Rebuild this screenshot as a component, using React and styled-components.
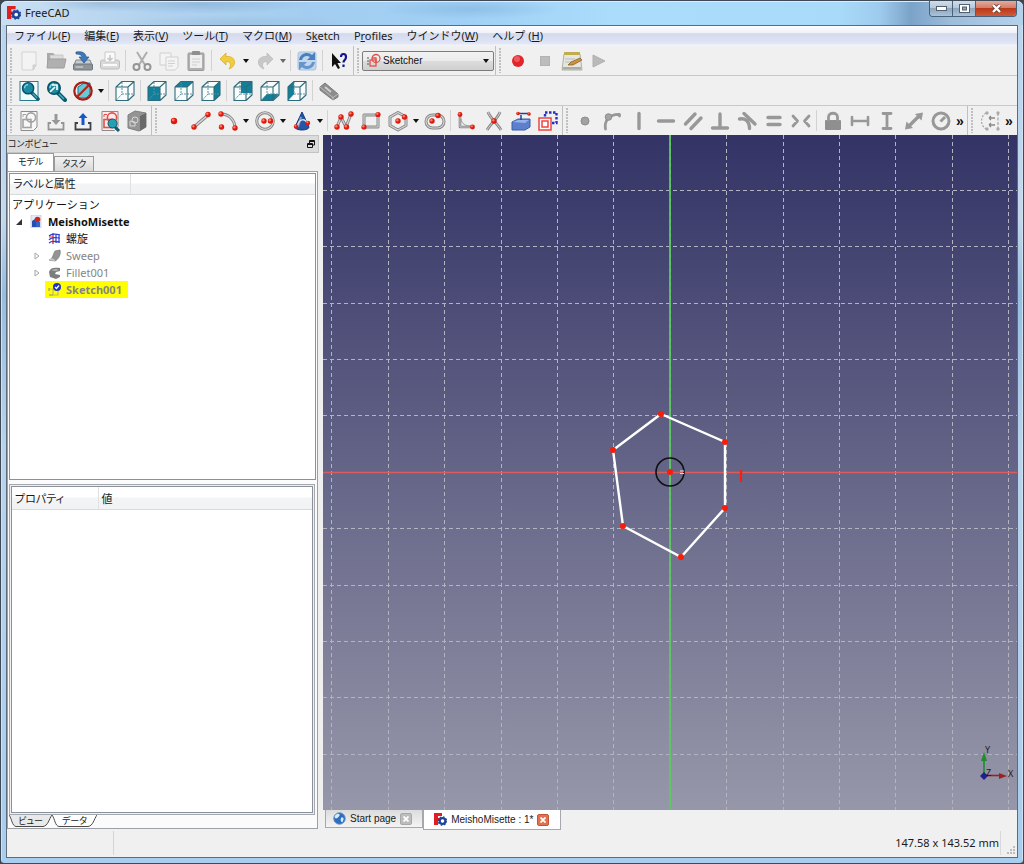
import React from 'react';
import styled, { createGlobalStyle, css } from 'styled-components';

const ui = '"Noto Sans", "Noto Sans CJK JP", sans-serif';
const gothic = '"Liberation Sans", "Noto Sans CJK JP", sans-serif';

const Global = createGlobalStyle`
  *, *::before, *::after { box-sizing: border-box; }
  body { margin: 0; background: #3c4650; font-family: ${ui}; font-size: 11px; color: #1a1a1a; }
  button { font: inherit; color: inherit; border: 0; padding: 0; margin: 0; background: none; cursor: default; }
  svg { display: block; }
`;

/* ---------- window frame ---------- */

const Window = styled.div`
  min-height: 100vh;
  display: flex;
  flex-direction: column;
  padding: 0 5px 5px;
  border: 1px solid #3f4a56;
  border-radius: 7px 7px 4px 4px;
  background:
    linear-gradient(90deg, #cfe2f4 0 1px, transparent 1px calc(100% - 1px), #cfe2f4 calc(100% - 1px)),
    linear-gradient(180deg, #b7d4ee 0, #bcd6ee 15%, #c4d8ea 25%, #96bde0 34%, #b8d4ec 52%, #a9cdee 100%);
`;

const TitleBar = styled.header`
  height: 24px;
  display: flex;
  align-items: center;
  gap: 4px;
  margin: 0 -5px;
  padding-left: 6px;
  border-radius: 6px 6px 0 0;
  background:
    radial-gradient(ellipse 60px 9px at 100px 2px, #8fb2d399, transparent),
    radial-gradient(ellipse 110px 10px at 200px 3px, #7da5cc88, transparent),
    radial-gradient(ellipse 120px 8px at 230px 22px, #87add055, transparent),
    radial-gradient(ellipse 90px 10px at 470px 8px, #84b4dd99, transparent),
    linear-gradient(90deg, #c9dff3 0, #b3d3ef 14%, #a3cdf0 30%, #a0d0f5 45%, #abdcfb 60%, #a9daf9 82%, #9ecbed 86%, #7ba3c8 89%, #9cbddb 93%, #b5d2eb 100%);
  box-shadow: inset 0 1px 0 #dcecf9;
`;

const Title = styled.h1`
  flex: 1;
  margin: 0;
  font-size: 11px;
  font-weight: 400;
  line-height: 24px;
`;

const WindowControls = styled.div`
  display: flex;
  align-self: flex-start;
  margin-right: 6px;
  border: 1px solid #49617a;
  border-top: 0;
  border-radius: 0 0 4px 4px;
  overflow: hidden;
`;

const WindowButton = styled.button`
  width: ${(p) => (p.$close ? 40 : 23)}px;
  height: 15px;
  display: grid;
  place-items: center;
  border-right: ${(p) => (p.$close ? '0' : '1px solid #49617a')};
  background: ${(p) =>
    p.$close
      ? 'linear-gradient(#e3aa9c 0, #d27c66 48%, #bb3a1c 50%, #cf5a38 100%)'
      : 'linear-gradient(#d0deeb 0, #b3c6d8 48%, #8ea7bf 50%, #abc3d8 100%)'};
`;

const Client = styled.div`
  flex: 1;
  display: flex;
  flex-direction: column;
  border: 1px solid #5f6b78;
  background: #f0f0f0;
`;

/* ---------- menu and toolbars ---------- */

const MenuBar = styled.nav`
  height: 20px;
  display: flex;
  gap: 14px;
  padding-left: 7px;
  background: linear-gradient(#fdfdfe 0, #eef1f9 35%, #d4daed 38%, #dfe5f5 85%, #f4f6fb 100%);
`;

const MenuItem = styled.button`
  line-height: 18px;
  white-space: nowrap;
`;

const ToolRow = styled.div`
  display: flex;
  height: 30px;
  border-bottom: 1px solid #c9c9c9;
  overflow: hidden;
  &:last-of-type { height: 29px; border-bottom: 0; }
`;

const Toolbar = styled.div`
  display: flex;
  align-items: center;
  padding-right: 1px;
  ${(p) => !p.$last && css`border-right: 1px solid #c0c0c0;`}
`;

const Grip = styled.span`
  width: 8px;
  height: 25px;
  background: radial-gradient(circle at 1px 1px, #c0c0c0 1px, transparent 1px) 3px 0 / 3px 3px repeat-y;
`;

const ToolButton = styled.button`
  width: 27px;
  height: 27px;
  display: grid;
  place-items: center;
`;

const ArrowButton = styled.button`
  width: 10px;
  height: 27px;
  display: grid;
  place-items: center;
  opacity: ${(p) => (p.disabled ? 0.6 : 1)};
`;

const Divider = styled.span`
  width: 1px;
  height: 21px;
  margin: 0 2px;
  background: #d2d2d2;
`;

const MoreButton = styled.button`
  width: 12px;
  height: 27px;
  font: 700 14px/24px "Liberation Sans", sans-serif;
  color: #111;
`;

const ComboBox = styled.label`
  position: relative;
  width: 132px;
  height: 20px;
  display: flex;
  align-items: center;
  padding-left: 4px;
  border: 1px solid #7c7c7c;
  border-radius: 2px;
  background: linear-gradient(#f2f2f2 0, #ebebeb 48%, #dddddd 50%, #cfcfcf 100%);
  & > svg:last-child { position: absolute; right: 4px; top: 7px; pointer-events: none; }
`;

const ComboSelect = styled.select`
  flex: 1;
  appearance: none;
  border: 0;
  padding: 0 0 0 1px;
  background: transparent;
  font: 10px/18px ${gothic};
  color: #111;
`;

/* ---------- left dock ---------- */

const Main = styled.main`
  flex: 1;
  display: flex;
  gap: 4px;
`;

const Dock = styled.aside`
  flex: 0 0 312px;
  display: flex;
  flex-direction: column;
`;

const DockTitle = styled.div`
  height: 18px;
  display: flex;
  justify-content: space-between;
  align-items: center;
  padding: 0 2px 0 1px;
  border: 1px solid #c3c3c3;
  border-left: 0;
  background: #dcdcdc;
  font: 9px/16px ${gothic};
  font-feature-settings: 'palt';
`;

const FloatButton = styled.button`
  width: 10px;
  height: 14px;
  display: grid;
  place-items: center;
`;

const TabRow = styled.div`
  height: 18px;
  display: flex;
  align-items: flex-end;
`;

const Tab = styled.button`
  height: ${(p) => (p.$active ? 18 : 15)}px;
  padding: 0 ${(p) => (p.$active ? 10 : 7)}px;
  border: 1px solid #9a9a9a;
  border-bottom: 0;
  font: 9px/13px ${gothic};
  font-feature-settings: 'palt';
  background: ${(p) => (p.$active ? '#fff' : 'linear-gradient(#f2f2f2, #d9d9d9)')};
`;

const Pane = styled.section`
  flex: 1;
  display: flex;
  flex-direction: column;
  margin-right: 1px;
  padding: 1px;
  border: 1px solid #9b9fa6;
  background: #fbfbfb;
`;

const TreeBox = styled.div`
  flex: 308 1 0;
  border: 1px solid #8b919a;
  background: #fff;
  margin-bottom: 4px;
`;

const TreeHeader = styled.div`
  height: 21px;
  display: flex;
  border-bottom: 1px solid #d8dade;
  background: linear-gradient(#fff 0, #fff 45%, #f3f4f6 50%, #f1f2f4 100%);
  line-height: 20px;
  font-feature-settings: 'palt';
  & > span { width: 121px; padding-left: 3px; border-right: 1px solid #dfe1e5; }
`;

const TreeList = styled.ul`
  list-style: none;
  margin: 0;
  padding: 1px 0 0;
`;

const TreeRow = styled.li`
  height: 17px;
  display: flex;
  align-items: center;
  padding-left: ${(p) => 2 + p.$level * 18}px;
  line-height: 17px;
  font-weight: ${(p) => (p.$bold ? 700 : 400)};
  color: ${(p) => (p.$muted ? '#858585' : '#111')};
`;

const Expander = styled.span`
  width: 15px;
  padding-left: 4px;
`;

const TreeLabel = styled.span`
  height: 17px;
  display: flex;
  align-items: center;
  gap: 5px;
  padding: 0 6px 0 3px;
  background: ${(p) => (p.$selected ? '#ffff00' : 'transparent')};
`;

const PropertyFrame = styled.div`
  flex: 330 1 0;
  margin-right: 1px;
  padding: 1px;
  border: 1px solid #a4a8ae;
  background: #f0f0f0;
  display: flex;
`;

const PropertyBox = styled.div`
  flex: 1;
  border: 1px solid #8b919a;
  background: #fff;
`;

const PropertyTable = styled.table`
  width: 100%;
  border-collapse: collapse;
  table-layout: fixed;
  th {
    height: 22px;
    padding: 0 0 0 3px;
    text-align: left;
    font-weight: 400;
    border-bottom: 1px solid #d8dade;
    background: linear-gradient(#fff 0, #fff 45%, #f3f4f6 50%, #f1f2f4 100%);
    font-feature-settings: 'palt';
  }
  th:first-child { width: 86px; border-right: 1px solid #dfe1e5; }
`;

const BottomTabs = styled.div`
  height: 12px;
  display: flex;
`;

const BottomTab = styled.button`
  position: relative;
  width: ${(p) => p.$width}px;
  height: 12px;
  font: 9px/10px ${gothic};
  font-feature-settings: 'palt';
  & > svg { position: absolute; inset: 0; width: 100%; height: 100%; }
  & > span { position: relative; }
`;

/* ---------- document area ---------- */

const Documents = styled.section`
  flex: 1;
  min-width: 0;
  display: flex;
  flex-direction: column;
`;

const Viewport = styled.div`
  flex: 1;
  position: relative;
  background: linear-gradient(#333366, #9797aa);
  & > svg { position: absolute; inset: 0; width: 100%; height: 100%; }
`;

const DocTabs = styled.div`
  height: 19px;
  display: flex;
  padding-left: 2px;
`;

const DocTab = styled.div`
  height: ${(p) => (p.$active ? 20 : 18)}px;
  display: flex;
  align-items: center;
  padding: 0 ${(p) => (p.$active ? '11px 0 10px' : '10px 0 7px')};
  border: 1px solid #a5a8ae;
  border-top: 0;
  background: ${(p) => (p.$active ? '#fff' : 'linear-gradient(#dcdcdc, #f4f4f4)')};
  font: 10px/18px ${gothic};
`;

const DocName = styled.button`
  display: flex;
  align-items: center;
  gap: 4px;
  margin-right: 4px;
  white-space: pre;
`;

const CloseTab = styled.button`
  width: 12px;
  height: 12px;
  display: grid;
  place-items: center;
  border-radius: 2px;
  border: 1px solid ${(p) => (p.$active ? '#c2553a' : '#a9a9a9')};
  background: ${(p) => (p.$active ? '#e2714f' : '#bdbdbd')};
`;

const StatusBar = styled.footer`
  height: 28px;
  display: flex;
  align-items: center;
  justify-content: space-between;
  padding-right: 2px;
`;

const Message = styled.div`
  width: 107px;
  height: 24px;
  border-right: 1px solid #d5d5d5;
`;

const Size = styled.div`
  display: flex;
  align-items: center;
  height: 24px;
  & > span { padding-right: 1px; border-right: 1px solid #d9d9d9; line-height: 24px; }
  & > svg { align-self: flex-end; margin-left: 5px; }
`;

/* ---------- drawings ---------- */

const Ball = ({ x, y, r = 3 }) => (
  <g>
    <circle cx={x} cy={y} r={r} fill="#dd1a0c" />
    <circle cx={x - r * 0.25} cy={y - r * 0.3} r={r * 0.45} fill="#ff7a66" />
  </g>
);

const FACES = {
  front: 'M2 7H14V20.5H2Z',
  top: 'M2 7 8 1.5H20L14 7Z',
  right: 'M14 7 20 1.5V15L14 20.5Z',
  rear: 'M9 1.5H20V13H9Z',
  bottom: 'M2 20.5 8 14H20L14 20.5Z',
  left: 'M2 7 8 1.5V14L2 20.5Z',
};

const Cube = ({ face }) => (
  <g fill="none" strokeLinejoin="round">
    <path d="M2 7 8 1.5H20V15L14 20.5H2Z" fill="#f8fcfd" />
    {face && <path d={FACES[face]} fill="#12809a" />}
    <path d="M8 2V14M8 14H20M8 14 2 20.5" stroke="#5e909d" strokeWidth="1" strokeDasharray="2 1" />
    <path d="M2 7H14V20.5H2ZM2 7 8 1.5H20L14 7M20 1.5V15L14 20.5" stroke="#2f6b7b" strokeWidth="1.1" />
  </g>
);

const Magnifier = ({ children }) => (
  <g>
    <path d="M12.5 12.5 20 20" stroke="#0b5b70" strokeWidth="4" strokeLinecap="round" />
    <path d="M14 14 19 19" stroke="#3dafc4" strokeWidth="1.5" />
    <circle cx="9" cy="8" r="6.2" fill="#1b8ba4" stroke="#075166" strokeWidth="1.6" />
    <path d="M5 8A4 4 0 0 1 9 4" stroke="#8ddceb" strokeWidth="1.5" fill="none" />
    {children}
  </g>
);

const Sketchy = ({ c, fill = '#f7f7f7' }) => (
  <g fill="none" stroke={c} strokeWidth="1.6">
    <path d="M3 1.5H19V17L15.5 20.5H3Z" fill={fill} strokeWidth="1" stroke="#8b8b8b" />
    <rect x="5" y="9.5" width="8" height="8" />
    <circle cx="13" cy="7.5" r="4.6" />
    <path d="M5 4.5H8M5 4.5V7" strokeWidth="1" />
  </g>
);

const Tray = ({ c, arrow, up }) => (
  <g>
    <path d="M6 13H3.5V19.5H18.5V13H16" fill="none" stroke={c} strokeWidth="1.8" />
    <path d={up ? 'M11 3 6.5 8H9.5V15H12.5V8H15.5Z' : 'M11 15 6.5 10H9.5V4H12.5V10H15.5Z'} fill={arrow} />
  </g>
);

const Thick = ({ d, w = 3.4 }) => <path d={d} fill="none" stroke="#989898" strokeWidth={w} strokeLinejoin="round" strokeLinecap="round" />;

const Line = ({ d, w = 3 }) => (
  <g fill="none" strokeLinejoin="round">
    <path d={d} stroke="#858585" strokeWidth={w} />
    <path d={d} stroke="#d5d5d5" strokeWidth={w - 1.8} />
  </g>
);

const ICONS = {
  new: <><path d="M4 2H18V15L15 20H4Z" fill="#f3f3f3" stroke="#d3d3d3" /><path d="M18 15H15V20Z" fill="#ddd" stroke="#ccc" /></>,
  open: <><path d="M2 3H8L10 5H18V16H2Z" fill="#a9a9a9" /><path d="M5 5H18V12H5Z" fill="#dcdcdc" stroke="#b7b7b7" strokeWidth=".6" /><path d="M3 9H21L19 18H2Z" fill="#b0b0b0" stroke="#9e9e9e" /></>,
  save: <><path d="M4 10H18L20 15H2Z" fill="#c7ccd1" stroke="#7e868e" /><rect x="1.5" y="14" width="19" height="6" rx="1" fill="#8e9499" stroke="#6f767d" /><path d="M3.5 17H11" stroke="#e4e4e4" /><path d="M4 2C10 1 14 3 14 7H17L12 13 7 7H10C10 5 7 4 4 4Z" fill="#3e78b8" stroke="#28588f" strokeWidth=".7" /></>,
  print: <><rect x="1.5" y="10" width="19" height="9" rx="2" fill="#d9d9d9" stroke="#bcbcbc" /><path d="M6 2H16V12H6Z" fill="#fafafa" stroke="#cacaca" /><path d="M11 5V10M8.500 8 11 10.500 13.500 8" fill="none" stroke="#c5c5c5" strokeWidth="1.500" /><path d="M4 15H18" stroke="#fafafa" strokeWidth="2" /></>,
  cut: <g fill="none" stroke="#959595" strokeWidth="2"><path d="M6 2 14 15M16 2 8 15" stroke="#adadad" /><circle cx="5.500" cy="17" r="3" /><circle cx="16.500" cy="17" r="3" /></g>,
  copy: <g fill="#f4f4f4" stroke="#d0d0d0"><path d="M2 3H13V15H2Z" /><path d="M8 7H20V17L17 20H8Z" /><path d="M10 11H17M10 13.500H17M10 16H15" /></g>,
  paste: <><rect x="3" y="3" width="16" height="17.500" rx="1" fill="#b0b0b0" stroke="#999" /><path d="M5 5H17V18H5Z" fill="#efefef" /><rect x="7" y="1" width="8" height="4" rx="1" fill="#8f8f8f" /><path d="M7 9H15M7 12H15M7 15H12" stroke="#cfcfcf" /></>,
  undo: <path d="M3 9 9 3V6.500C15 6 18 9 17.500 13 17 16 15 18 12 19 14.500 15 14 11.500 9 11.500V15Z" fill="#f1cd3e" stroke="#d9ae2a" strokeWidth=".8" />,
  redo: <path d="M19 9 13 3V6.500C7 6 4 9 4.500 13 5 16 7 18 10 19 7.500 15 8 11.500 13 11.500V15Z" fill="#c8c8c8" stroke="#bbb" strokeWidth=".8" />,
  refresh: <><rect x="2" y="2" width="18" height="18" rx="2" fill="#c3d6eb" stroke="#a9c1dd" /><path d="M3 10C4 3 12 1 16 5L19 2V10H11L14 7C11 5 7 6 6 10Z" fill="#4a80bd" /><path d="M19 12C18 19 10 21 6 17L3 20V12H11L8 15C11 17 15 16 16 12Z" fill="#6496cd" /></>,
  help: <><path d="M4 3V17L7 14 10 19 12 18 9.500 13H13Z" fill="#111" /><path d="M13 7C13 3 18 3 18 7 18 10 15.500 10 15.500 12.500M15.500 14.500V17" fill="none" stroke="#15158f" strokeWidth="2.200" /></>,
  record: <><circle cx="11" cy="11" r="6" fill="#e3242b" /><circle cx="10" cy="9" r="3" fill="#f0585c" /></>,
  stop: <rect x="6.500" y="6.500" width="9" height="9" fill="#bcbcbc" stroke="#b2b2b2" />,
  macro: <><path d="M3 4H19L21 20H1Z" fill="#e6e6e1" stroke="#b0b0aa" /><path d="M3 2H19V5H3Z" fill="#c0ad4b" /><path d="M4 9H14M4 12H11" stroke="#bbb" /><path d="M2 17H20V19.500H1.500Z" fill="#a9ada2" /><path d="M7 15 10 12 19 8 21 10 12 15Z" fill="#cf9239" stroke="#6c4c1c" strokeWidth=".6" /></>,
  play: <path d="M5 5 17 11 5 17Z" fill="#b9b9b9" stroke="#b0b0b0" />,
  fitAll: <><rect x="2" y="1.500" width="18" height="19" fill="#f4fbfd" stroke="#2b7b8f" /><g transform="translate(2 1) scale(.9)"><Magnifier /></g></>,
  fitSelection: <Magnifier><path d="M5 12 10 7M7 5H12V10" stroke="#fff" strokeWidth="1.600" fill="none" /></Magnifier>,
  drawStyle: <><path d="M6 7 12 3H18V14L14 18H6Z" fill="#67c9d6" stroke="#117386" /><circle cx="11" cy="11" r="8.700" fill="none" stroke="#a81c16" strokeWidth="2.200" /><path d="M5 17 17 5" stroke="#b5221b" strokeWidth="2.200" /></>,
  iso: <Cube />,
  front: <Cube face="front" />, top: <Cube face="top" />, right: <Cube face="right" />,
  rear: <Cube face="rear" />, bottom: <Cube face="bottom" />, left: <Cube face="left" />,
  measure: <><path d="M2 7 7 3 20 14V17L15 20 2 10Z" fill="#8d8d8d" stroke="#7c7c7c" /><path d="M2 7 15 17.500 20 14M15 17V20" fill="none" stroke="#bcbcbc" /><path d="M7 7 13 12" stroke="#d0d0d0" strokeWidth="2" /></>,
  sketch: <Sketchy c="#a2a2a2" />,
  leave: <Tray c="#959595" arrow="#989898" />,
  leaveUp: <Tray c="#3d4148" arrow="#1759c4" up />,
  viewSketch: <><Sketchy c="#e2504a" fill="#fdeaea" /><path d="M15 16 20 21" stroke="#0d5d70" strokeWidth="3" /><circle cx="13.500" cy="13.500" r="4.500" fill="#23a0b6" stroke="#0b5568" /></>,
  mapSketch: <><path d="M2 5 9 1 20 3V17L13 21 2 18Z" fill="#949494" stroke="#808080" /><path d="M14 6 20 3V17L14 21Z" fill="#696969" /><circle cx="9" cy="10" r="3" fill="none" stroke="#d9d9d9" /><path d="M4 11V16H9V12Z" fill="none" stroke="#d9d9d9" /></>,
  point: <Ball x={11} y={11} r={3.2} />,
  line: <><Line d="M4 17 18 5" w={3.4} /><Ball x={4} y={17} r={2.700} /><Ball x={18} y={4.500} r={2.700} /></>,
  arc: <><Line d="M4 4C12 4 18 10 18 18" /><Ball x={4} y={4} r={2.700} /><Ball x={4.500} y={17} r={2.700} /><Ball x={18} y={18} r={2.700} /></>,
  circle: <><circle cx="11" cy="11" r="8.300" fill="none" stroke="#858585" strokeWidth="3" /><circle cx="11" cy="11" r="8.300" fill="none" stroke="#d5d5d5" strokeWidth="1.200" /><Ball x={10} y={11} r={2.700} /><Ball x={16.500} y={11} r={2.700} /></>,
  conic: <><path d="M11 2 18 17C18 21 4 21 4 17Z" fill="#2455a8" stroke="#163a78" /><path d="M10 7 7 17" stroke="#7ba2dd" strokeWidth="2" /><path d="M6 17C8 8 14 8 17 14" fill="none" stroke="#e2e2e2" strokeWidth="1.500" /><Ball x={5} y={16.500} r={2.200} /><Ball x={17} y={13} r={2.200} /></>,
  polyline: <><Line d="M4 17 8 7 13 17 18 4" /><Ball x={4} y={17} r={2.700} /><Ball x={8} y={7} r={2.700} /><Ball x={13.500} y={17} r={2.700} /><Ball x={18} y={4} r={2.700} /></>,
  rectangle: <><Line d="M4 5H18V17H4Z" /><Ball x={18} y={4.500} r={2.600} /><Ball x={4} y={17} r={2.600} /></>,
  polygon: <><Line d="M11 2.500 19 7V15.500L11 20 3 15.500V7Z" /><Ball x={11} y={11} r={2.700} /><Ball x={17.500} y={7} r={2.700} /></>,
  slot: <><rect x="2" y="5" width="18" height="13" rx="6.500" fill="none" stroke="#858585" strokeWidth="3" /><rect x="2" y="5" width="18" height="13" rx="6.500" fill="none" stroke="#d5d5d5" strokeWidth="1.200" /><Ball x={8} y={11} r={2.700} /><Ball x={14} y={5.500} r={2.700} /></>,
  fillet: <><Line d="M4 5V17H18" w={2.600} /><path d="M5 9C6 14 9 16 15 16" stroke="#999" fill="none" /><Ball x={4} y={4.500} r={2.400} /><Ball x={16.500} y={17} r={2.400} /></>,
  trim: <><Line d="M5 2C7 8 14 13 18 20M17 2C15 8 9 12 4 20" w={2.800} /><Ball x={11} y={11} r={2.700} /></>,
  external: <><path d="M2 12 8 9H20V17L15 20H2Z" fill="#5c80cb" stroke="#3b5da9" /><path d="M3 12 8 10H19L15 13Z" fill="#95b2ea" /><path d="M11 10V5M9 3.500H19" stroke="#26408c" strokeWidth="1.500" /><Ball x={8} y={3.500} r={1.800} /><Ball x={19} y={4} r={1.800} /></>,
  carbon: <><path d="M8 2.500H19.500V13H8Z" fill="none" stroke="#2730c2" strokeWidth="2.400" strokeDasharray="2.500 1.500" /><rect x="2" y="8" width="12" height="12" fill="#fff" stroke="#ee4340" strokeWidth="1.500" /><rect x="5" y="11" width="6" height="6" fill="none" stroke="#ee4340" strokeWidth="1.500" /></>,
  coincident: <circle cx="11" cy="11" r="4" fill="#a2a2a2" stroke="#8c8c8c" />,
  onObject: <><Thick d="M4.500 19C3 11 8 4 18.500 4.500V6" w={2.800} /><circle cx="7.500" cy="7" r="3.300" fill="#a4a4a4" stroke="#8c8c8c" /></>,
  vertical: <Thick d="M11 3.500V18.500" />,
  horizontal: <Thick d="M3.500 11H18.500" />,
  parallel: <Thick d="M3.500 14 13 4M9 18.500 19 8" />,
  perpendicular: <Thick d="M11 4V18M3.500 18H18.500" />,
  tangent: <Thick d="M3.500 9C9 8 13.500 11 13.500 18.500M8 3.500 19 14" />,
  equal: <Thick d="M5 7.500H17M5 14.500H17" />,
  symmetric: <Thick d="M3 6 7.500 11 3 16M19 6 14.500 11 19 16" w={2.800} />,
  lock: <><rect x="3" y="10" width="16" height="10" rx="1" fill="#8f8f8f" /><path d="M6.500 11V7C6.500 2 15.500 2 15.500 7V11" fill="none" stroke="#989898" strokeWidth="2.800" /></>,
  distanceX: <Thick d="M3 7V15M19 7V15M3 11H19" w={2.600} />,
  distanceY: <Thick d="M7 3.500H15M7 18.500H15M11 4V18" w={2.800} />,
  distance: <><Thick d="M7 15 15 7" /><path d="M20 2.500 18.500 10.500 12 4ZM2 19.500 3.500 11.500 10 18Z" fill="#989898" /></>,
  radius: <><circle cx="11" cy="11" r="8" fill="none" stroke="#989898" strokeWidth="3" /><path d="M10.500 11.500 15 7" stroke="#989898" strokeWidth="3" /></>,
  closeShape: <g fill="none" stroke="#aaa" strokeWidth="1.300"><path d="M7 3C1 7 1 15 7 19" strokeDasharray="2 1.500" /><path d="M19 3V19" strokeDasharray="3 1.500" /><path d="M10 8H16M10 8 12 6M10 8 12 10M10 15H16M10 15 12 13M10 15 12 17" stroke="#888" /><g fill="#999"><circle cx="8" cy="3" r="1" /><circle cx="19" cy="3" r="1" /><circle cx="8" cy="19" r="1" /><circle cx="19" cy="19" r="1" /></g></g>,
};

const Glyph = ({ name }) => <svg width="22" height="22" viewBox="0 0 22 22" aria-hidden="true">{ICONS[name]}</svg>;

const DownArrow = () => <svg width="6" height="4" viewBox="0 0 6 4" aria-hidden="true"><path d="M0 0H6L3 4Z" fill="#111" /></svg>;

const Logo = ({ size = 13 }) => (
  <svg width={size} height={size} viewBox="0 0 13 13" aria-hidden="true">
    <path d="M0 0H8V3H4V5H7V8H4V12H0Z" fill="#e21f1f" />
    <circle cx="8.500" cy="8" r="2.900" fill="none" stroke="#1c469b" strokeWidth="2.200" />
    <circle cx="8.500" cy="8" r="4.200" fill="none" stroke="#1c469b" strokeWidth="1.200" strokeDasharray="1.600 1.700" />
    <circle cx="8.500" cy="8" r="1.300" fill="#fff" />
  </svg>
);

const Globe = () => (
  <svg width="13" height="13" viewBox="0 0 14 14" aria-hidden="true">
    <circle cx="7" cy="7" r="6.200" fill="#2a6fc4" stroke="#6d8fb9" />
    <path d="M3 3C5 1 8 2 7 4 5 6 5 7 3 7 1 6 2 4 3 3ZM9 6C12 5 12 8 10 11 8 11 8 7 9 6Z" fill="#d7ebfb" />
  </svg>
);

const TREE_ICONS = {
  doc: <><path d="M1 0H11V13H1Z" fill="#e4e9f4" stroke="#c3cad9" strokeWidth=".8" /><path d="M2 6 5 4 8 6V12H2Z" fill="#2450b5" /><circle cx="7.500" cy="4.500" r="2.800" fill="#d2241d" /><path d="M6 7H10V12H6Z" fill="#3264c9" /></>,
  helix: <g fill="none"><path d="M5 1V12" stroke="#d93a3a" strokeWidth="1.400" /><path d="M1 4C4 1 8 2 12 3M1 8C4 4 8 6 12 6M1 11C4 8 8 10 12 10M11 2V11M8 2V11" stroke="#2b3fd0" strokeWidth="1.200" /><path d="M1 5H5" stroke="#d93a3a" /></g>,
  sweep: <><path d="M1 11C5 10 5 5 7 2L12 1C13 5 11 10 7 12Z" fill="#939393" stroke="#777" strokeWidth=".7" /><path d="M1 11C3 9 6 9 7 12Z" fill="#c9c9c9" /></>,
  fillet: <><path d="M1 6C2 2 5 1 12 2V5L8 6 7 8 12 9V11L8 13 2 11Z" fill="#7d7d7d" /><path d="M3 4 8 3 11 4 7 5Z" fill="#b9b9b9" /></>,
  sketch: <><path d="M1 6H5V12H10V8" fill="none" stroke="#c2bb6c" strokeWidth="1.200" /><path d="M1 12H5M1 5V8" stroke="#8c8c6c" /><circle cx="9" cy="4" r="4" fill="#1d32c8" /><path d="M7 4 8.500 5.500 11 2.500" fill="none" stroke="#fff" strokeWidth="1.300" /></>,
};

const NodeIcon = ({ name }) => <svg width="13" height="13" viewBox="0 0 13 13" aria-hidden="true">{TREE_ICONS[name]}</svg>;

/* ---------- data ---------- */

const MENUS = [
  ['ファイル(', 'F', ')'], ['編集(', 'E', ')'], ['表示(', 'V', ')'], ['ツール(', 'T', ')'], ['マクロ(', 'M', ')'],
  ['S', 'k', 'etch'], ['P', 'r', 'ofiles'], ['ウインドウ(', 'W', ')'], ['ヘルプ (', 'H', ')'],
];

const FILE_TOOLS = 'new open save print | cut copy paste | undo v redo x | refresh | help'.split(' ');
const MACRO_TOOLS = 'record stop macro play'.split(' ');
const VIEW_TOOLS = 'fitAll fitSelection drawStyle v | iso | front top right | rear bottom left | measure'.split(' ');
const SKETCH_TOOLS = 'sketch leave leaveUp viewSketch mapSketch'.split(' ');
const GEOMETRY_TOOLS = 'point line arc v circle v conic v | polyline rectangle polygon v slot | fillet trim external carbon'.split(' ');
const CONSTRAINT_TOOLS = 'coincident onObject vertical horizontal parallel perpendicular tangent equal symmetric | lock distanceX distanceY distance radius'.split(' ');

const NODES = [
  { label: 'MeishoMisette', icon: 'doc', level: 0, open: true, bold: true },
  { label: '螺旋', icon: 'helix', level: 1 },
  { label: 'Sweep', icon: 'sweep', level: 1, closed: true, muted: true },
  { label: 'Fillet001', icon: 'fillet', level: 1, closed: true, muted: true },
  { label: 'Sketch001', icon: 'sketch', level: 1, bold: true, muted: true, selected: true },
];

const HEXAGON = [[338, 279], [402, 307], [402, 373], [358, 422], [300, 391], [290, 315]];
const STEPS = [-6, -5, -4, -3, -2, -1, 0, 1, 2, 3, 4, 5, 6];
const gridLine = (center, k) => Math.floor(center + k * 56.4) + 0.5;

const Tools = ({ items }) =>
  items.map((item, i) => {
    if (item === '|') return <Divider key={i} />;
    if (item === 'v' || item === 'x')
      return <ArrowButton key={i} disabled={item === 'x'} aria-label="More"><DownArrow /></ArrowButton>;
    return <ToolButton key={i} aria-label={item}><Glyph name={item} /></ToolButton>;
  });

const Scene = () => (
  <svg viewBox="0 0 694 675" preserveAspectRatio="xMidYMid slice" aria-label="3D view">
    <g stroke="#b4b4c0" strokeWidth="1" strokeDasharray="4 3">
      {STEPS.map((k) => <path key={`v${k}`} d={`M${gridLine(347.3, k)} 0V675`} />)}
      {STEPS.map((k) => <path key={`h${k}`} d={`M0 ${gridLine(337.3, k)}H694`} />)}
    </g>
    <path d="M0 337.500H694" stroke="#dc5b5c" strokeWidth="1.600" />
    <path d="M347 0V675" stroke="#5bc95f" strokeWidth="1.800" />
    <polygon points={HEXAGON.map((p) => p.join()).join(' ')} fill="none" stroke="#fff" strokeWidth="2.400" />
    {HEXAGON.map(([x, y]) => <circle key={x + y} cx={x} cy={y} r="3" fill="#fb1c08" />)}
    <circle cx="347" cy="337" r="14" fill="none" stroke="#111" strokeWidth="1.600" />
    <circle cx="347" cy="337" r="3" fill="#fb1c08" />
    <path d="M357 336H361M357 338.500H361" stroke="#e7dede" strokeWidth="1.200" />
    <path d="M418 335V347" stroke="#f6200c" strokeWidth="2.200" />
    <path d="M661 640V623" stroke="#1f8d2b" strokeWidth="1.600" />
    <path d="M661 617 658 626H664Z" fill="#1f8d2b" />
    <path d="M661 640.500H678" stroke="#9c2026" strokeWidth="1.600" />
    <path d="M684 641 676 638V644Z" fill="#9c2026" />
    <path d="M661 637 665 641 661 645 657 641Z" fill="#20208f" />
    <g fill="#1c1c24" fontFamily='"Noto Sans", sans-serif' fontSize="9">
      <text x="662" y="618">Y</text>
      <text x="685" y="642">X</text>
      <text x="663" y="641">Z</text>
    </g>
  </svg>
);

const Cross = () => (
  <svg width="6" height="6" viewBox="0 0 6 6" aria-hidden="true"><path d="M.5.5 5.500 5.500M5.500.5.5 5.500" stroke="#fff" strokeWidth="1.800" /></svg>
);

const BackTab = ({ width, fill, children }) => (
  <BottomTab $width={width}>
    <svg viewBox={`0 0 ${width} 12`} preserveAspectRatio="none" aria-hidden="true">
      <path d={`M0 0C3 4 3 11 7 11.500H${width - 9}C${width - 4} 11 ${width - 3} 4 ${width} 0`} fill={fill} stroke="#4a4a4a" />
    </svg>
    <span>{children}</span>
  </BottomTab>
);

export default function App() {
  return (
    <>
      <Global />
      <Window>
        <TitleBar>
          <Logo size={14} />
          <Title>FreeCAD</Title>
          <WindowControls>
            <WindowButton aria-label="Minimize">
              <svg width="11" height="5" viewBox="0 0 11 5"><rect x=".5" y=".5" width="10" height="4" fill="#fff" stroke="#52606f" /></svg>
            </WindowButton>
            <WindowButton aria-label="Maximize">
              <svg width="11" height="9" viewBox="0 0 11 9"><rect x=".5" y=".5" width="10" height="8" fill="#fff" stroke="#52606f" /><rect x="3.500" y="3" width="4" height="3" fill="#8ea7bf" stroke="#52606f" /></svg>
            </WindowButton>
            <WindowButton $close aria-label="Close">
              <svg width="11" height="9" viewBox="0 0 11 9"><path d="M2 1 9 8M9 1 2 8" stroke="#6d4038" strokeWidth="4" /><path d="M2 1 9 8M9 1 2 8" stroke="#fff" strokeWidth="2.400" /></svg>
            </WindowButton>
          </WindowControls>
        </TitleBar>
        <Client>
          <MenuBar>
            {MENUS.map(([a, key, b]) => <MenuItem key={a}>{a}<u>{key}</u>{b}</MenuItem>)}
          </MenuBar>
          <div>
            <ToolRow>
              <Toolbar><Grip /><Tools items={FILE_TOOLS} /></Toolbar>
              <Toolbar>
                <Grip />
                <ComboBox>
                  <svg width="15" height="15" viewBox="0 0 15 15" fill="none" stroke="#e0524b" strokeWidth="1.300" aria-hidden="true">
                    <path d="M1 4V13" stroke="#777" strokeDasharray="2 1" /><rect x="3" y="7" width="6" height="6" /><circle cx="9" cy="5.500" r="4" /><path d="M5 5H9V9" />
                  </svg>
                  <ComboSelect aria-label="Workbench" defaultValue="Sketcher"><option>Sketcher</option></ComboSelect>
                  <DownArrow />
                </ComboBox>
              </Toolbar>
              <Toolbar $last><Grip /><Tools items={MACRO_TOOLS} /></Toolbar>
            </ToolRow>
            <ToolRow>
              <Toolbar $last><Grip /><Tools items={VIEW_TOOLS} /></Toolbar>
            </ToolRow>
            <ToolRow>
              <Toolbar><Grip /><Tools items={SKETCH_TOOLS} /></Toolbar>
              <Toolbar><Grip /><Tools items={GEOMETRY_TOOLS} /></Toolbar>
              <Toolbar><Grip /><Tools items={CONSTRAINT_TOOLS} /><MoreButton>»</MoreButton></Toolbar>
              <Toolbar $last><Grip /><Tools items={['closeShape']} /><MoreButton>»</MoreButton></Toolbar>
            </ToolRow>
          </div>
          <Main>
            <Dock>
              <DockTitle>
                コンボビュー
                <FloatButton aria-label="Float">
                  <svg width="8" height="8" viewBox="0 0 8 8" fill="none" stroke="#111"><path d="M2.500 3V.5H7.500V5H5.500M2.500 1.500H7.500" /><path d="M.5 3.500H5.500V7.500H.5ZM.5 4.500H5.500" /></svg>
                </FloatButton>
              </DockTitle>
              <TabRow>
                <Tab $active>モデル</Tab>
                <Tab>タスク</Tab>
              </TabRow>
              <Pane>
                <TreeBox>
                  <TreeHeader><span>ラベルと属性</span></TreeHeader>
                  <TreeList>
                    <TreeRow $level={0}>アプリケーション</TreeRow>
                    {NODES.map((n) => (
                      <TreeRow key={n.label} $level={n.level} $bold={n.bold} $muted={n.muted}>
                        <Expander>
                          {n.open && <svg width="6" height="6" viewBox="0 0 6 6"><path d="M6 0V6H0Z" fill="#333" /></svg>}
                          {n.closed && <svg width="6" height="8" viewBox="0 0 6 8"><path d="M1 1 5 4 1 7Z" fill="#fff" stroke="#a5a5a5" /></svg>}
                        </Expander>
                        <TreeLabel $selected={n.selected}><NodeIcon name={n.icon} />{n.label}</TreeLabel>
                      </TreeRow>
                    ))}
                  </TreeList>
                </TreeBox>
                <PropertyFrame>
                  <PropertyBox>
                    <PropertyTable>
                      <thead><tr><th>プロパティ</th><th>値</th></tr></thead>
                    </PropertyTable>
                  </PropertyBox>
                </PropertyFrame>
                <BottomTabs>
                  <BackTab width={43} fill="#e9e9e9">ビュー</BackTab>
                  <BackTab width={45} fill="#fff">データ</BackTab>
                </BottomTabs>
              </Pane>
            </Dock>
            <Documents>
              <Viewport><Scene /></Viewport>
              <DocTabs>
                <DocTab>
                  <DocName><Globe />Start page</DocName>
                  <CloseTab aria-label="Close Start page"><Cross /></CloseTab>
                </DocTab>
                <DocTab $active>
                  <DocName><Logo />MeishoMisette : 1*</DocName>
                  <CloseTab $active aria-label="Close MeishoMisette"><Cross /></CloseTab>
                </DocTab>
              </DocTabs>
            </Documents>
          </Main>
          <StatusBar>
            <Message />
            <Size>
              <span>147.58 x 143.52 mm</span>
              <svg width="9" height="9" viewBox="0 0 9 9" fill="#bdbdbd"><path d="M7 0H9V2H7ZM4 3H6V5H4ZM7 3H9V5H7ZM1 6H3V8H1ZM4 6H6V8H4ZM7 6H9V8H7Z" /></svg>
            </Size>
          </StatusBar>
        </Client>
      </Window>
    </>
  );
}
